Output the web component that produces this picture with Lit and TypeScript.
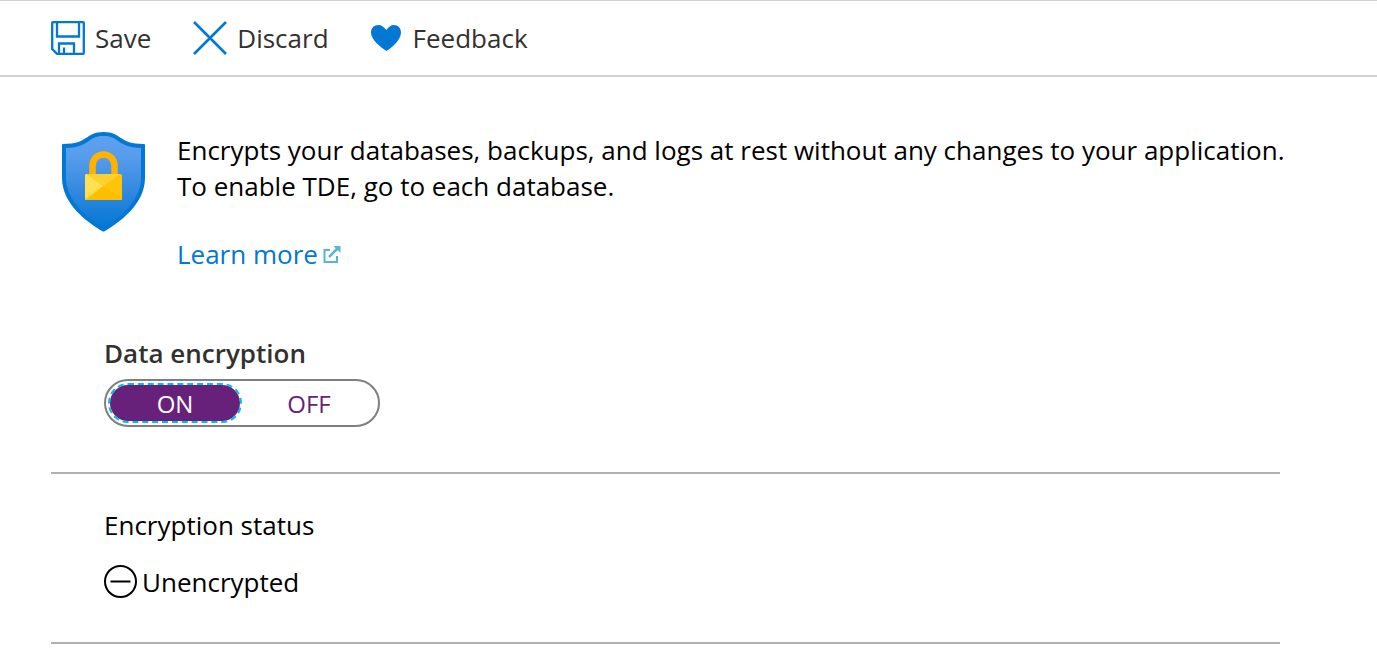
import { LitElement, html, css, svg } from "lit";
import { customElement, state } from "lit/decorators.js";

const saveIcon = svg`
  <svg width="34" height="34" viewBox="0 0 34 34" fill="none" stroke="#0078d4" stroke-width="2.300" aria-hidden="true">
    <path d="M2 1.200h30a.8.8 0 0 1 .8.8v30a.8.8 0 0 1-.8.8H6l-4.800-4.800V2a.8.8 0 0 1 .8-.8z" />
    <path d="M6 1v14.500h22V1" />
    <path d="M8 33V22.500h15V33" />
    <path d="M13 33v-6.500" />
  </svg>`;

const discardIcon = svg`
  <svg width="34" height="34" viewBox="0 0 34 34" fill="none" stroke="#0078d4" stroke-width="2.600" aria-hidden="true">
    <path d="M1 1l32 32M33 1L1 33" />
  </svg>`;

const heartIcon = svg`
  <svg width="30" height="26" viewBox="0 0 30 26" fill="#0078d4" aria-hidden="true">
    <path d="M15.500 26C10 22.500 0 15 0 7.500C0 3 3 0 7.500 0C10.500 0 13 2 15.300 5C17.500 2 20 0 22.700 0C27 0 30 3 30 7.500C30 15 21 22.500 15.500 26z" />
  </svg>`;

const shieldIcon = svg`
  <svg width="83" height="100" viewBox="0 0 83 100" aria-hidden="true">
    <defs>
      <linearGradient id="body" x1="0" y1="0" x2="0" y2="1">
        <stop offset="0" stop-color="#5ea0ef" />
        <stop offset="0.200" stop-color="#589eed" />
        <stop offset="0.600" stop-color="#3488de" />
        <stop offset="1" stop-color="#0078d4" />
      </linearGradient>
    </defs>
    <path fill="#0078d4" d="M0 13Q0 12 1 12C27 12 23 0 41.500 0S56 12 82 12Q83 12 83 13V46C83 72 58 90 43 99Q41.500 100 40 99C25 90 0 72 0 46z" />
    <path fill="url(#body)" d="M4 16C29 15 25 4 41.500 4S54 15 79 16V46C79 69 57 86 41.500 96C26 86 4 69 4 46z" />
    <path fill="none" stroke="#ffb300" stroke-width="6.500" d="M30.500 44V34C30.500 18.500 52.500 18.500 52.500 34V44" />
    <rect x="23" y="42" width="37" height="26" rx="1.500" fill="#ffc307" />
    <path fill="#ffe052" d="M23 43.500Q23 42 24.500 42L41.500 54L23 66.500z" />
    <path fill="#ffd02e" d="M24.500 42H58.500L41.500 54z" />
    <path fill="#ffd42f" d="M23 66.500L41.500 54L60 66.500Q60 68 58.500 68H24.500Q23 68 23 66.500z" />
    <path fill="#ffbd00" d="M41.500 54L60 66.500Q60 68 58.500 68H24z" />
  </svg>`;

const externalIcon = svg`
  <svg width="18" height="18" viewBox="0 0 18 18" fill="none" stroke="#59b4d9" stroke-width="2" aria-hidden="true">
    <path d="M7 5H1.500V17H14V11" />
    <path d="M6 12L15 3" stroke-width="2.500" />
    <path fill="#59b4d9" stroke="none" d="M10.500 1H17.500V8z" />
  </svg>`;

const minusIcon = svg`
  <svg width="34" height="34" viewBox="0 0 34 34" fill="none" stroke="#000" stroke-width="2" aria-hidden="true">
    <circle cx="16.500" cy="16.500" r="15.500" />
    <path d="M6.500 16.500H26.500" />
  </svg>`;

@customElement("app-root")
export class AppRoot extends LitElement {
  @state() private encryption = "on";

  static styles = css`
    :host {
      display: block;
      background: #fff;
      color: #000;
      font-family: "Open Sans", "Noto Sans", sans-serif;
      font-size: 26px;
      line-height: 36px;
    }
    svg { display: block; flex: none; }
    .toolbar {
      display: flex;
      gap: 42px;
      padding: 19px 51px;
      border-top: 1px solid #d2d2d2;
      border-bottom: 2px solid #d2d2d2;
    }
    .command {
      display: flex;
      align-items: center;
      gap: 10px;
      padding: 0;
      border: 0;
      background: none;
      color: #323130;
      font: inherit;
      cursor: pointer;
    }
    .feedback { gap: 12px; }
    .content { padding: 55px 51px 24px; }
    .intro { display: flex; gap: 32px; padding-left: 11px; }
    .description { margin: 0 0 32px; }
    .link {
      display: inline-flex;
      align-items: center;
      gap: 5px;
      color: #0078d4;
      text-decoration: none;
    }
    .section {
      margin-right: 46px;
      padding: 0 53px;
      border-bottom: 2px solid #b1b1b5;
    }
    .settings { padding-top: 63px; padding-bottom: 45px; }
    .field { margin: 0; padding: 0; border: 0; min-width: 0; }
    .legend {
      padding: 0;
      margin-bottom: 8px;
      color: #323130;
      font-weight: 600;
    }
    .switch {
      display: inline-flex;
      vertical-align: top;
      box-sizing: border-box;
      height: 48px;
      padding: 2px;
      border: 2px solid #7f7f7f;
      border-radius: 24px;
    }
    .option {
      box-sizing: border-box;
      width: 134px;
      border: 2px solid transparent;
      border-radius: 20px;
      color: #68217a;
      font-size: 24px;
      line-height: 38px;
      text-align: center;
      cursor: pointer;
    }
    .selected {
      border: 2px dashed #00bcf2;
      background: #68217a;
      background-clip: padding-box;
      color: #fff;
    }
    .radio {
      position: absolute;
      width: 1px;
      height: 1px;
      margin: 0;
      opacity: 0;
    }
    .status { padding-top: 33px; padding-bottom: 42px; }
    .heading { margin: 0 0 21px; font: inherit; }
    .value { display: flex; align-items: center; gap: 4px; margin: 0; }
  `;

  private option(value: string, text: string) {
    const selected = this.encryption === value;
    return html`<label class="option ${selected ? "selected" : ""}">
      <input class="radio" type="radio" name="encryption" .value=${value} .checked=${selected}
        @change=${() => (this.encryption = value)} />${text}</label>`;
  }

  render() {
    return html`
      <div class="toolbar" role="toolbar">
        <button class="command" type="button">${saveIcon}<span>Save</span></button>
        <button class="command" type="button">${discardIcon}<span>Discard</span></button>
        <button class="command feedback" type="button">${heartIcon}<span>Feedback</span></button>
      </div>
      <main class="content">
        <section class="intro">
          ${shieldIcon}
          <div>
            <p class="description">
              Encrypts your databases, backups, and logs at rest without any changes to your application.<br />
              To enable TDE, go to each database.
            </p>
            <a class="link" href="#">Learn more${externalIcon}</a>
          </div>
        </section>
        <section class="section settings">
          <fieldset class="field">
            <legend class="legend">Data encryption</legend>
            <div class="switch">${this.option("on", "ON")}${this.option("off", "OFF")}</div>
          </fieldset>
        </section>
        <section class="section status">
          <h2 class="heading">Encryption status</h2>
          <p class="value">${minusIcon}<span>Unencrypted</span></p>
        </section>
      </main>
    `;
  }
}
